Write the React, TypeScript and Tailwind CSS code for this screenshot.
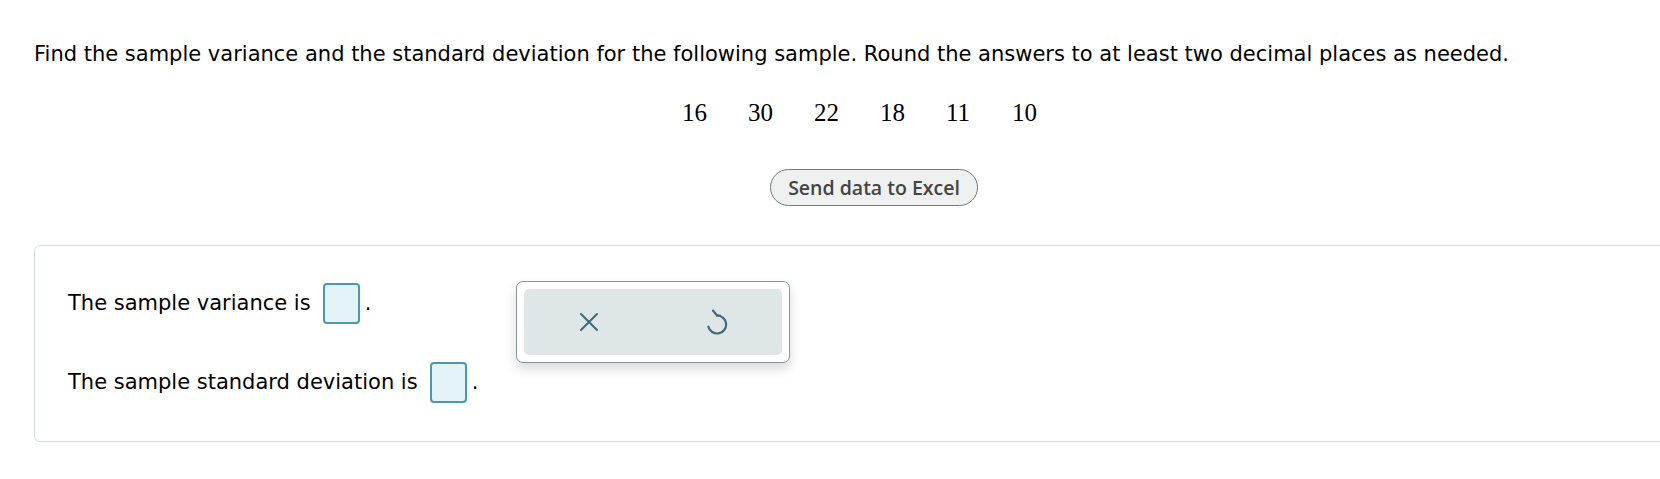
import React from "react";

const sample = [16, 30, 22, 18, 11, 10];

function AnswerBox() {
  return (
    <span className="inline-block w-[37px] h-[41px] align-middle rounded-[4px] border-2 border-[#4a9aac] bg-[#e4f3f8]" />
  );
}

function CloseIcon() {
  return (
    <svg width="20" height="20" viewBox="0 0 20 20" fill="none" stroke="#3e6b79" strokeWidth="2" strokeLinecap="round">
      <path d="M2 2L18 18M18 2L2 18" />
    </svg>
  );
}

function ResetIcon() {
  return (
    <svg width="24" height="28" viewBox="0 0 24 28" fill="none" stroke="#3e6b79" strokeWidth="2.2" strokeLinecap="round" strokeLinejoin="round">
      <path d="M11 8.5a9 9 0 1 1-8.6 11.2" />
      <path d="M7 3.5l4 5h3" />
    </svg>
  );
}

export default function App() {
  return (
    <div className="w-[1660px] h-[479px] overflow-hidden bg-white pt-[40px] pl-[34px] font-['DejaVu_Sans',Verdana,sans-serif] text-black">
      {/* Question */}
      <p className="text-[21px] leading-[28px]">
        Find the sample variance and the standard deviation for the following sample. Round the answers to at least two decimal places as needed.
      </p>

      {/* Sample data */}
      <div className="mt-[32px] ml-[648px] flex font-['Liberation_Serif','Times_New_Roman',serif] text-[25px] leading-[26px]">
        {sample.map((n, i) => (
          <span key={i} className="w-[66px]">{n}</span>
        ))}
      </div>

      <div className="mt-[43px] ml-[736px]">
        <button className="h-[37px] w-[208px] rounded-full border border-[#717c7c] bg-[#eff1f0] font-['Open_Sans',Lato,sans-serif] text-[19.5px] font-semibold text-[#444]">
          Send data to Excel
        </button>
      </div>

      {/* Answer card */}
      <div className="relative mt-[39px] w-[1700px] h-[197px] rounded-[6px] border border-[#d3dcdc] pl-[33px] pt-[37px]">
        <div className="flex items-center text-[21px] h-[41px]">
          <span className="mr-[12px]">The sample variance is</span>
          <AnswerBox />
          <span className="ml-[5px]">.</span>
        </div>
        <div className="flex items-center text-[21px] h-[41px] mt-[38px]">
          <span className="mr-[12px]">The sample standard deviation is</span>
          <AnswerBox />
          <span className="ml-[5px]">.</span>
        </div>

        {/* Floating toolbar */}
        <div className="absolute left-[481px] top-[35px] w-[274px] h-[82px] rounded-[7px] border border-[#85979d] bg-white p-[7px] shadow-[0_6px_12px_rgba(0,0,0,0.15)]">
          <div className="flex h-full rounded-[5px] bg-[#dfe6e8]">
            <button className="flex flex-1 items-center justify-center">
              <CloseIcon />
            </button>
            <button className="flex flex-1 items-center justify-center pb-[2px]">
              <ResetIcon />
            </button>
          </div>
        </div>
      </div>
    </div>
  );
}
